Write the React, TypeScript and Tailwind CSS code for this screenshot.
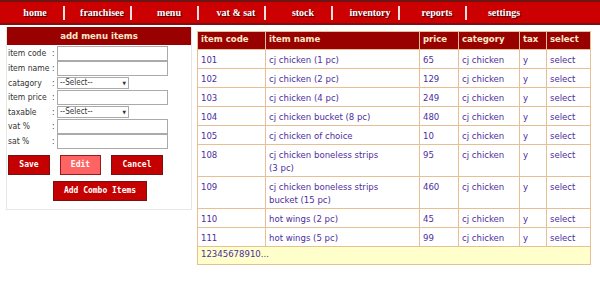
import React from 'react';

const navItems = ['home', 'franchisee', 'menu', 'vat & sat', 'stock', 'inventory', 'reports', 'settings'];

const rows = [
  { code: '101', name: 'cj chicken (1 pc)', price: '65' },
  { code: '102', name: 'cj chicken (2 pc)', price: '129' },
  { code: '103', name: 'cj chicken (4 pc)', price: '249' },
  { code: '104', name: 'cj chicken bucket (8 pc)', price: '480' },
  { code: '105', name: 'cj chicken of choice', price: '10' },
  { code: '108', name: 'cj chicken boneless strips (3 pc)', price: '95' },
  { code: '109', name: 'cj chicken boneless strips bucket (15 pc)', price: '460' },
  { code: '110', name: 'hot wings (2 pc)', price: '45' },
  { code: '111', name: 'hot wings (5 pc)', price: '99' },
];

const fields = [
  { label: 'item code', sep: ' :', kind: 'input' },
  { label: 'item name', sep: ':', kind: 'input' },
  { label: 'catagory', sep: ':', kind: 'select' },
  { label: 'item price', sep: ':', kind: 'input' },
  { label: 'taxable', sep: ':', kind: 'select' },
  { label: 'vat %', sep: ':', kind: 'input' },
  { label: 'sat %', sep: ':', kind: 'input' },
];

const td = 'border border-[#e8bf95] px-[3px] align-top';

export default function App() {
  return (
    <div className="w-[600px] h-[291px] bg-white text-[9.5px] font-['DejaVu_Sans_Condensed','DejaVu_Sans',Verdana,sans-serif] overflow-hidden">
      {/* top nav */}
      <div className="h-[25px] bg-[#cc0000] border-t-2 border-b-2 border-t-[#6d1414] border-b-[#7a1111] flex items-center pl-[10px]">
        {navItems.map((item, i) => (
          <div key={item} className="flex items-center">
            <div className="w-[50px] text-center text-white font-bold text-[10px] font-['Liberation_Serif',Georgia,serif] [text-shadow:1px_1px_1px_#300] whitespace-nowrap">
              {item}
            </div>
            {i < navItems.length - 1 && (
              <div className="ml-[3px] mr-[12px] w-[2px] h-[14px] bg-[#f4e0e0]" />
            )}
          </div>
        ))}
      </div>

      <div className="flex pt-[2px]">
        {/* left form */}
        <div className="ml-[6px] w-[186px] h-[183px] border-l border-r border-b border-[#e6e6e6]">
          <div className="h-[18px] bg-[#990000] text-[#ffe8c8] font-bold text-[9.5px] text-center leading-[18px]">
            add menu items
          </div>
          <div className="flex flex-col pt-[1px] text-[8.5px] text-[#333]">
            {fields.map((f) => (
              <div
                key={f.label}
                className={`flex items-center ${f.kind === 'input' ? 'h-[15px]' : 'h-[14px]'}`}
              >
                <div className="w-[44px] pl-[1px] whitespace-nowrap leading-none">{f.label}</div>
                <div className="w-[6px] pl-[1px] leading-none">{f.sep.trim()}</div>
                {f.kind === 'input' ? (
                  <div className="w-[111px] h-[15px] border border-[#aaa] bg-white" />
                ) : (
                  <div className="w-[72px] h-[12px] border border-[#aaa] bg-white flex items-center justify-between px-[2px] text-[8px] leading-none">
                    <span>--Select--</span>
                    <span className="text-[5px]">▼</span>
                  </div>
                )}
              </div>
            ))}
          </div>
          <div className="flex gap-[10px] mt-[6px] pl-[1px] font-['DejaVu_Sans_Mono',monospace] font-bold text-white text-[8px]">
            <div className="w-[42px] h-[20px] bg-[#c40000] border border-[#7a1010] flex items-center justify-center">Save</div>
            <div className="w-[41px] h-[20px] bg-[#ff6464] border border-[#9a1a1a] flex items-center justify-center">Edit</div>
            <div className="w-[52px] h-[20px] bg-[#c40000] border border-[#7a1010] flex items-center justify-center">Cancel</div>
          </div>
          <div className="flex mt-[6px] pl-[46px] font-['DejaVu_Sans_Mono',monospace] font-bold text-white text-[8px]">
            <div className="w-[94px] h-[20px] bg-[#c40000] border border-[#7a1010] flex items-center justify-center">Add Combo Items</div>
          </div>
        </div>

        {/* table */}
        <div className="ml-[5px] mt-[4px] w-[394px]">
          <table className="w-full border-collapse leading-[13px]">
            <thead>
              <tr className="bg-[#990000] text-[#ffe8c8] font-bold text-[9.5px] text-left h-[18px]">
                <th className={`${td} w-[68px] align-middle`}>item code</th>
                <th className={`${td} w-[154px] align-middle`}>item name</th>
                <th className={`${td} w-[39px] align-middle`}>price</th>
                <th className={`${td} w-[61px] align-middle`}>category</th>
                <th className={`${td} w-[27px] align-middle`}>tax</th>
                <th className={`${td} align-middle`}>select</th>
              </tr>
            </thead>
            <tbody className="text-[#4d2e9e]">
              {rows.map((r) => (
                <tr key={r.code} className="h-[19px]">
                  <td className={`${td} pt-[3px]`}>{r.code}</td>
                  <td className={`${td} pt-[3px] pb-[2px] pr-[40px]`}>{r.name}</td>
                  <td className={`${td} pt-[3px]`}>{r.price}</td>
                  <td className={`${td} pt-[3px]`}>cj chicken</td>
                  <td className={`${td} pt-[3px]`}>y</td>
                  <td className={`${td} pt-[3px]`}>select</td>
                </tr>
              ))}
              <tr className="h-[18px] bg-[#ffffcc]">
                <td colSpan={6} className={`${td} align-middle`}>12345678910...</td>
              </tr>
            </tbody>
          </table>
        </div>
      </div>
    </div>
  );
}
